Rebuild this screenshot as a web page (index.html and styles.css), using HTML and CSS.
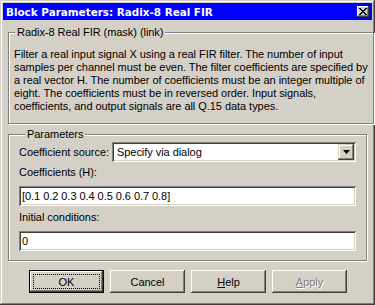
FILE: index.html
```html
<!DOCTYPE html>
<html lang="en">
<head>
	<meta charset="UTF-8">
	<title>Block Parameters: Radix-8 Real FIR</title>
	<link rel="stylesheet" href="styles.css">
</head>
<body>
<div class="window">
	<div class="titlebar">
		<span class="title">Block Parameters: Radix-8 Real FIR</span>
		<span class="close">
			<svg width="8" height="7" viewBox="0 0 8 7"><path d="M0 0h2v1h1v1h2v-1h1v-1h2v1h-1v1h-1v1h-1v1h1v1h1v1h1v1h-2v-1h-1v-1h-2v1h-1v1h-2v-1h1v-1h1v-1h1v-1h-1v-1h-1v-1h-1z" fill="#000"/></svg>
		</span>
	</div>

	<fieldset class="group desc">
		<legend>Radix-8 Real FIR (mask) (link)</legend>
		<p>Filter a real input signal X using a real FIR filter. The number of input<br>
		samples per channel must be even. The filter coefficients are specified by<br>
		a real vector H. The number of coefficients must be an integer multiple of<br>
		eight. The coefficients must be in reversed order. Input signals,<br>
		coefficients, and output signals are all Q.15 data types.</p>
	</fieldset>

	<fieldset class="group params">
		<legend>Parameters</legend>
		<div class="row">
			<label>Coefficient source:</label>
			<div class="combo">
				<span class="combo-text">Specify via dialog</span>
				<span class="combo-btn">
					<svg width="7" height="4" viewBox="0 0 7 4"><path d="M0 0h7l-3.5 4z" fill="#000"/></svg>
				</span>
			</div>
		</div>
		<label class="field-label first">Coefficients (H):</label>
		<div class="edit">[0.1 0.2 0.3 0.4 0.5 0.6 0.7 0.8]</div>
		<label class="field-label">Initial conditions:</label>
		<div class="edit">0</div>
	</fieldset>

	<div class="buttons">
		<button class="btn default"><span class="focus">OK</span></button>
		<button class="btn">Cancel</button>
		<button class="btn"><u>H</u>elp</button>
		<button class="btn disabled"><u>A</u>pply</button>
	</div>
</div>
</body>
</html>
```

FILE: styles.css
```css
body{
	margin: 0;
	background-color: #d4d0c8;
	font-family: "Liberation Sans", Arial, sans-serif;
	font-size: 11px;
	letter-spacing: -0.05px;
	color: #000;
}
.window{
	width: 375px;
	height: 305px;
	box-sizing: border-box;
	padding: 3px;
	background-color: #d4d0c8;
	box-shadow: inset -1px -1px #404040, inset 1px 1px #d4d0c8,
		inset -2px -2px #808080, inset 2px 2px #fff;
}

/* 제목 표시줄 */
.titlebar{
	height: 17px;
	background-color: #0000ff;
	color: #fff;
	display: flex;
	align-items: center;
	justify-content: space-between;
	padding: 0 2px 0 3px;
}
.title{
	font-family: "DejaVu Sans", Verdana, sans-serif;
	font-weight: bold;
	font-size: 10.4px;
	letter-spacing: 0;
}
.close{
	width: 12px;
	height: 11px;
	margin-right: 1px;
	background-color: #d4d0c8;
	box-shadow: inset -1px -1px #404040, inset 1px 1px #fff,
		inset -2px -2px #808080;
	display: flex;
	align-items: center;
	justify-content: center;
}

/* 그룹 박스 */
.group{
	margin: 6px 5px 0 5px;
	padding: 0;
	border: 1px solid #808080;
	box-shadow: inset 1px 1px #fff, 1px 1px #fff;
}
.group legend{
	margin-left: 6px;
	padding: 0 2px;
	background-color: #d4d0c8;
	line-height: 13px;
}
.desc p{
	margin: 0;
	padding: 9px 5px 10px 5px;
	line-height: 13px;
	white-space: nowrap;
}
.params{
	margin-top: 4px;
	padding: 1px 10px 9px 10px;
}
.row{
	display: flex;
	align-items: center;
	justify-content: space-between;
}
.field-label{
	display: block;
	line-height: 13px;
	margin: 5px 0 7px 0;
}
.field-label.first{
	margin-top: 4px;
}

/* 입력 상자 */
.combo, .edit{
	height: 20px;
	box-sizing: border-box;
	background-color: #fff;
	box-shadow: inset 1px 1px #808080, inset -1px -1px #fff,
		inset 2px 2px #404040, inset -2px -2px #d4d0c8;
}
.combo{
	width: 244px;
	display: flex;
	align-items: center;
	padding: 2px;
}
.combo-text{
	flex: 1;
	padding-left: 3px;
}
.combo-btn{
	width: 16px;
	height: 16px;
	background-color: #d4d0c8;
	box-shadow: inset -1px -1px #404040, inset 1px 1px #d4d0c8,
		inset -2px -2px #808080, inset 2px 2px #fff;
	display: flex;
	align-items: center;
	justify-content: center;
}
.edit{
	line-height: 20px;
	padding-left: 3px;
}

/* 버튼 */
.buttons{
	display: flex;
	justify-content: center;
	gap: 6px;
	margin-top: 9px;
	padding-left: 1px;
}
.btn{
	width: 75px;
	height: 23px;
	border: none;
	background-color: #d4d0c8;
	font-family: "Liberation Sans", Arial, sans-serif;
	font-size: 11px;
	letter-spacing: -0.05px;
	color: #000;
	padding: 0;
	box-shadow: inset -1px -1px #404040, inset 1px 1px #fff,
		inset -2px -2px #808080, inset 2px 2px #d4d0c8;
}
.btn.default{
	box-shadow: inset 0 0 0 1px #000, inset -2px -2px #404040, inset 2px 2px #fff,
		inset -3px -3px #808080;
	display: flex;
	padding: 4px;
}
.focus{
	flex: 1;
	border: 1px dotted #000;
	display: flex;
	align-items: center;
	justify-content: center;
}
.btn.disabled{
	color: #808080;
	text-shadow: 1px 1px #fff;
}
```
